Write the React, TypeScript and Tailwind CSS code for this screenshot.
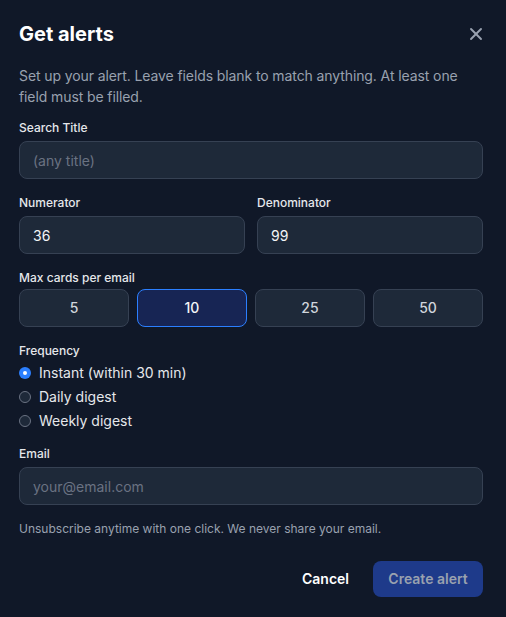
import React, { useState } from "react";
import { X } from "lucide-react";

const font = { fontFamily: 'Inter, "Noto Sans", sans-serif' };

function Label({ children, mb = "mb-[5px]" }: { children: React.ReactNode; mb?: string }) {
  return <div className={`${mb} text-xs font-medium leading-4 text-gray-200`}>{children}</div>;
}

function Input({ placeholder, value }: { placeholder?: string; value?: string }) {
  return (
    <input
      defaultValue={value}
      placeholder={placeholder}
      className="block h-[38px] w-full rounded-lg border border-gray-700 bg-gray-800 px-[13px] text-sm text-gray-100 placeholder:text-gray-500 outline-none"
    />
  );
}

export default function App() {
  const [max, setMax] = useState(10);
  const [freq, setFreq] = useState("instant");
  const opts = [
    { k: "instant", l: "Instant (within 30 min)" },
    { k: "daily", l: "Daily digest" },
    { k: "weekly", l: "Weekly digest" },
  ];
  return (
    <div style={font} className="min-h-[617px] w-[506px] bg-gray-900 pb-5 pl-[19px] pr-[23px] pt-5">
      <div className="flex items-center justify-between">
        <h2 className="text-xl font-bold leading-7 text-white">Get alerts</h2>
        <X size={20} strokeWidth={2.25} className="-mr-[3px] text-gray-400" />
      </div>
      <p className="mt-[17px] text-sm leading-[21px] tracking-[-0.1px] text-gray-400">
        Set up your alert. Leave fields blank to match anything. At least one field must be filled.
      </p>
      <div className="mt-[13px]">
        <Label>Search Title</Label>
        <Input placeholder="(any title)" />
      </div>
      <div className="mt-4 grid grid-cols-2 gap-3">
        <div>
          <Label>Numerator</Label>
          <Input value="36" />
        </div>
        <div>
          <Label>Denominator</Label>
          <Input value="99" />
        </div>
      </div>
      <div className="mt-4">
        <Label mb="mb-[3px]">Max cards per email</Label>
        <div className="grid grid-cols-4 gap-2">
          {[5, 10, 25, 50].map((n) => (
            <button
              key={n}
              onClick={() => setMax(n)}
              className={
                n === max
                  ? "h-[38px] rounded-lg border border-blue-500 bg-[#172554] text-sm font-medium text-gray-100"
                  : "h-[38px] rounded-lg border border-gray-700 bg-gray-800 text-sm font-medium text-gray-300"
              }
            >
              {n}
            </button>
          ))}
        </div>
      </div>
      <div className="mt-4">
        <Label mb="mb-1">Frequency</Label>
        <div className="flex flex-col gap-1">
          {opts.map((o) => (
            <label key={o.k} className="flex h-5 cursor-pointer items-center gap-2" onClick={() => setFreq(o.k)}>
              {freq === o.k ? (
                <span className="flex h-3 w-3 items-center justify-center rounded-full bg-blue-500">
                  <span className="h-1 w-1 rounded-full bg-white" />
                </span>
              ) : (
                <span className="h-3 w-3 rounded-full border-[1.5px] border-gray-500 bg-gray-800" />
              )}
              <span className="text-sm text-gray-200">{o.l}</span>
            </label>
          ))}
        </div>
      </div>
      <div className="mt-[15px]">
        <Label>Email</Label>
        <Input placeholder="your@email.com" />
      </div>
      <p className="mt-4 text-xs leading-4 text-gray-400">
        Unsubscribe anytime with one click. We never share your email.
      </p>
      <div className="mt-6 flex items-center justify-end gap-2">
        <button className="h-9 px-4 text-sm font-semibold text-white">Cancel</button>
        <button className="h-9 w-[110px] rounded-lg bg-[#1e3a8a] text-sm font-semibold text-gray-400">
          Create alert
        </button>
      </div>
    </div>
  );
}
